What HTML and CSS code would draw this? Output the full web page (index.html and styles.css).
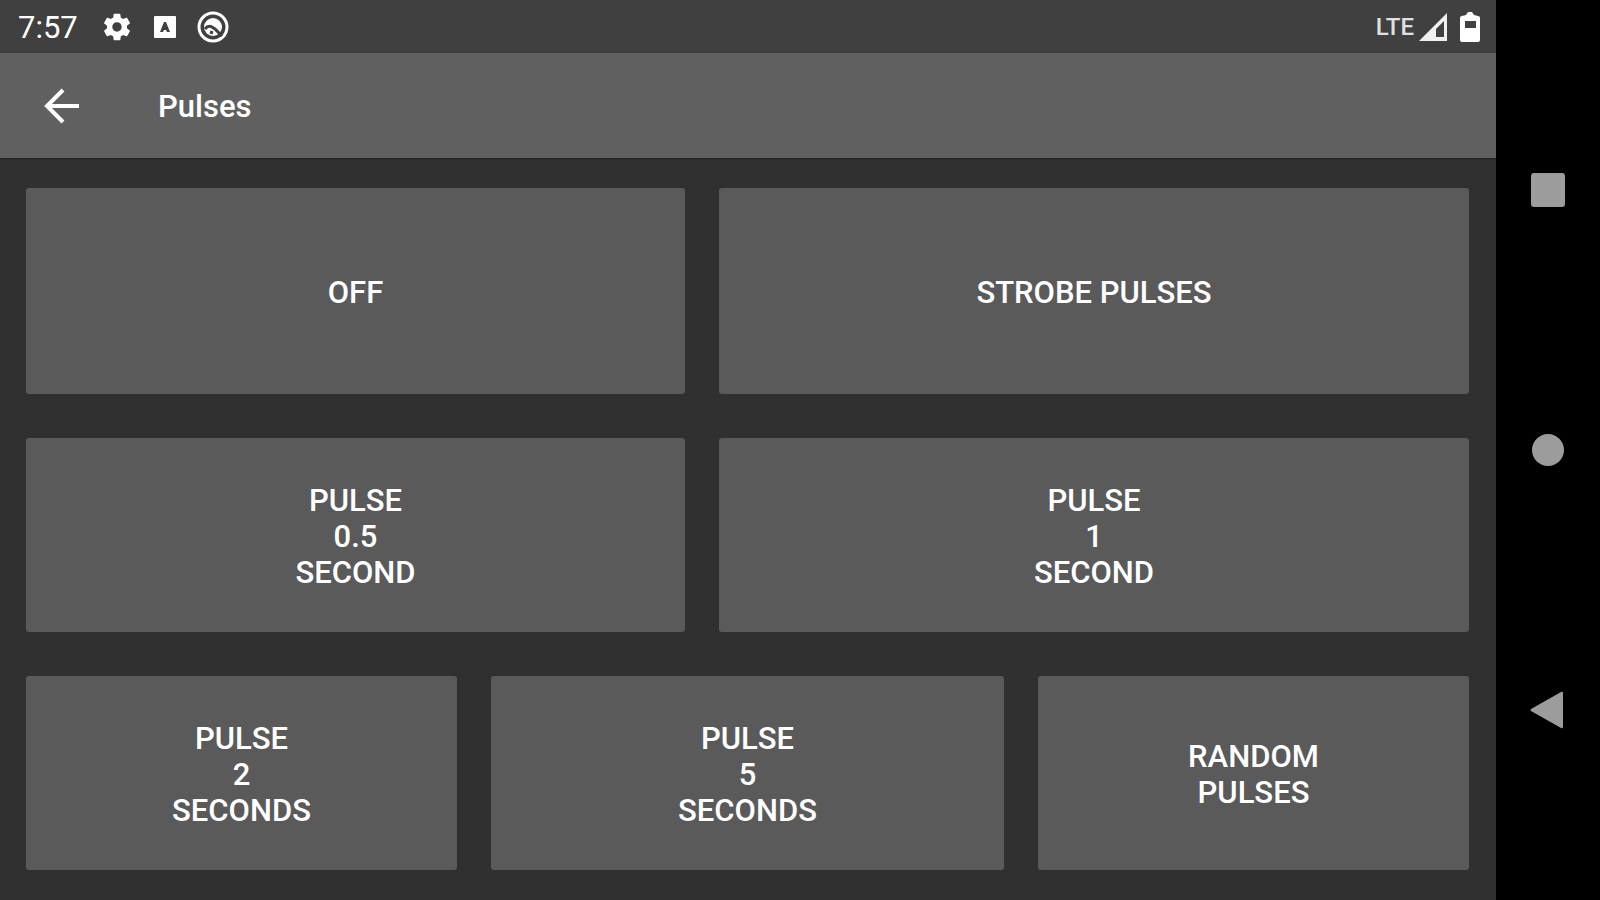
FILE: index.html
```html
<!DOCTYPE html>
<html lang="en">
<head>
    <meta charset="UTF-8">
    <meta name="viewport" content="width=device-width, initial-scale=1.0">
    <title>Pulses</title>
    <link rel="stylesheet" href="styles.css">
</head>
<body>
    <div class="app">
        <div class="status-bar">
            <span class="clock">7:57</span>
            <svg class="icon gear" width="32" height="32" viewBox="0 0 24 24">
                <path d="M19.43 12.98c.04-.32.07-.64.07-.98s-.03-.66-.07-.98l2.11-1.65c.19-.15.24-.42.12-.64l-2-3.46c-.12-.22-.39-.3-.61-.22l-2.49 1c-.52-.4-1.08-.73-1.69-.98l-.38-2.65C14.46 2.18 14.25 2 14 2h-4c-.25 0-.46.18-.49.42l-.38 2.65c-.61.25-1.17.59-1.69.98l-2.49-1c-.23-.09-.49 0-.61.22l-2 3.46c-.13.22-.07.49.12.64l2.11 1.65c-.04.32-.07.65-.07.98s.03.66.07.98l-2.11 1.65c-.19.15-.24.42-.12.64l2 3.46c.12.22.39.3.61.22l2.49-1c.52.4 1.08.73 1.69.98l.38 2.65c.03.24.24.42.49.42h4c.25 0 .46-.18.49-.42l.38-2.65c.61-.25 1.17-.59 1.69-.98l2.49 1c.23.09.49 0 .61-.22l2-3.46c.12-.22.07-.49-.12-.64l-2.11-1.65zM12 15.5c-1.93 0-3.5-1.57-3.5-3.5s1.57-3.5 3.5-3.5 3.5 1.57 3.5 3.5-1.57 3.5-3.5 3.5z"/>
            </svg>
            <svg class="icon letter" width="32" height="32" viewBox="0 0 32 32">
                <rect x="5" y="5" width="22" height="22" rx="1"/>
                <path class="cut" d="M11 21l4-10h2l4 10h-3l-1-2h-2l-1 2z"/>
            </svg>
            <svg class="icon radar" width="32" height="32" viewBox="0 0 32 32">
                <circle class="line" cx="16" cy="16" r="14"/>
                <circle cx="16" cy="16" r="9"/>
                <path class="cut-line" d="M8 18q3-4 7-2l3 2 7 7"/>
                <path class="cut-line" d="M13 21l3 1"/>
            </svg>
            <span class="network">LTE</span>
            <svg class="icon signal" width="28" height="28" viewBox="0 0 28 28">
                <path d="M0 28L28 0v28zM25 24V8L17 16v8z" fill-rule="evenodd"/>
            </svg>
            <svg class="icon battery" width="20" height="30" viewBox="0 0 20 30">
                <path d="M2 4l4-1 2-3h4l2 3 4 1q2 0 2 2v22q0 2-2 2H2q-2 0-2-2V6q0-2 2-2zM5 9v7h11V9z" fill-rule="evenodd"/>
            </svg>
        </div>

        <header class="toolbar">
            <button class="back" aria-label="Back">
                <svg class="icon" width="36" height="36" viewBox="0 0 36 36">
                    <path class="arrow" d="M35 18H3M19 2L3 18l16 16"/>
                </svg>
            </button>
            <h1>Pulses</h1>
        </header>

        <main class="grid">
            <div class="row row-tall">
                <button class="pulse">Off</button>
                <button class="pulse wide">Strobe Pulses</button>
            </div>
            <div class="row">
                <button class="pulse">Pulse<br>0.5<br>Second</button>
                <button class="pulse wide">Pulse<br>1<br>Second</button>
            </div>
            <div class="row row-three">
                <button class="pulse">Pulse<br>2<br>Seconds</button>
                <button class="pulse">Pulse<br>5<br>Seconds</button>
                <button class="pulse">Random<br>Pulses</button>
            </div>
        </main>
    </div>

    <nav class="nav-bar">
        <button aria-label="Recent apps">
            <svg width="34" height="34" viewBox="0 0 34 34"><rect width="34" height="34" rx="3"/></svg>
        </button>
        <button aria-label="Home">
            <svg width="34" height="34" viewBox="0 0 34 34"><circle cx="17" cy="17" r="16"/></svg>
        </button>
        <button aria-label="Back">
            <svg width="36" height="38" viewBox="0 0 36 38"><path d="M1 18L31 1q2-1 2 1v34q0 2-2 1L1 20q-1-1 0-2z"/></svg>
        </button>
    </nav>
</body>
</html>
```

FILE: styles.css
```css
* {
    box-sizing: border-box;
}
body {
    margin: 0;
    display: flex;
    min-height: 100vh;
    font-family: Roboto, sans-serif;
    background-color: #303030;
    color: #fff;
}
button {
    border: none;
    padding: 0;
    font-family: inherit;
    color: inherit;
    cursor: pointer;
}
svg {
    display: block;
}
.app {
    flex: 1;
    display: flex;
    flex-direction: column;
}

/* Status bar */
.status-bar {
    display: flex;
    align-items: center;
    height: 53px;
    padding: 0 16px 0 18px;
    background-color: #404040;
}
.icon {
    fill: #fff;
}
.clock {
    padding-top: 2px;
    font-size: 31px;
    line-height: 36px;
}
.gear {
    margin-left: 23px;
}
.letter, .radar {
    margin-left: 16px;
}
.cut {
    fill: #404040;
}
.line {
    fill: none;
    stroke: #fff;
    stroke-width: 3;
}
.cut-line {
    fill: none;
    stroke: #404040;
    stroke-width: 3;
}
.network {
    margin-left: auto;
    font-size: 24px;
    font-weight: 500;
    color: #e0e0e0;
}
.signal {
    margin-left: 5px;
    fill: #f0f0f0;
}
.battery {
    margin-left: 13px;
}

/* Toolbar */
.toolbar {
    display: flex;
    align-items: center;
    height: 105px;
    padding-left: 44px;
    background-color: #606060;
    box-shadow: 0 1px 2px rgba(0, 0, 0, 0.3);
}
.back {
    background: none;
}
.arrow {
    fill: none;
    stroke: #fff;
    stroke-width: 4;
}
.toolbar h1 {
    margin: 0 0 0 78px;
    padding-top: 2px;
    font-size: 31px;
    font-weight: 500;
    line-height: 36px;
}

/* Buttons */
.grid {
    flex: 1;
    display: flex;
    flex-direction: column;
    gap: 44px;
    padding: 30px 27px 30px 26px;
}
.row {
    flex: 194 1 0;
    display: flex;
    gap: 34px;
}
.row-tall {
    flex-grow: 206;
}
.pulse {
    flex: 659 1 0;
    padding-top: 3px;
    border-radius: 3px;
    background-color: #5a5a5b;
    font-size: 31px;
    font-weight: 500;
    line-height: 36px;
    text-transform: uppercase;
}
.wide {
    flex-grow: 750;
}
.row-three {
    display: grid;
    grid-template-columns: 431fr 513fr 431fr;
}

/* System navigation */
.nav-bar {
    display: flex;
    flex-direction: column;
    width: 104px;
    padding: 60px 0;
    background-color: #000;
}
.nav-bar button {
    flex: 1;
    display: flex;
    align-items: center;
    justify-content: center;
    background: none;
}
.nav-bar svg {
    fill: #9c9c9c;
}
```
